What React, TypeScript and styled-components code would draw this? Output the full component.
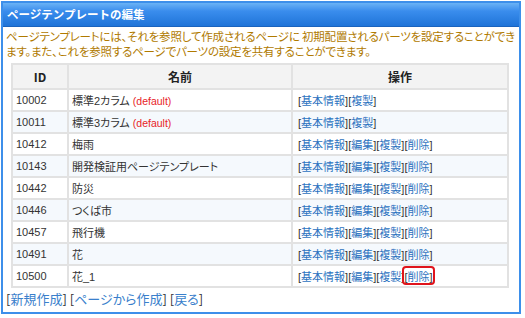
import React from "react";
import styled, { createGlobalStyle } from "styled-components";

const GlobalStyle = createGlobalStyle`
  body {
    margin: 0;
    background: #ffffff;
    font-family: "Noto Sans CJK JP", "Noto Sans", sans-serif;
  }
`;

type Row = { id: string; name: string; isDefault?: boolean; ops: string[]; marked?: boolean };

const rows: Row[] = [
  { id: "10002", name: "標準2カラム", isDefault: true, ops: ["基本情報", "複製"] },
  { id: "10011", name: "標準3カラム", isDefault: true, ops: ["基本情報", "複製"] },
  { id: "10412", name: "梅雨", ops: ["基本情報", "編集", "複製", "削除"] },
  { id: "10143", name: "開発検証用ページテンプレート", ops: ["基本情報", "編集", "複製", "削除"] },
  { id: "10442", name: "防災", ops: ["基本情報", "編集", "複製", "削除"] },
  { id: "10446", name: "つくば市", ops: ["基本情報", "編集", "複製", "削除"] },
  { id: "10457", name: "飛行機", ops: ["基本情報", "編集", "複製", "削除"] },
  { id: "10491", name: "花", ops: ["基本情報", "編集", "複製", "削除"] },
  { id: "10500", name: "花_1", ops: ["基本情報", "編集", "複製", "削除"], marked: true },
];

const App: React.FC = () => {
  return (
    <>
      <GlobalStyle />
      <Panel>
        <Header>ページテンプレートの編集</Header>
        <Description>
          ページテンプレートには、それを参照して作成されるページに 初期配置されるパーツを設定することができます。また、これを参照するページでパーツの設定を共有することができます。
        </Description>
        <Table>
          <thead>
            <tr>
              <Th $width={52}>ID</Th>
              <Th $width={220}>名前</Th>
              <Th>操作</Th>
            </tr>
          </thead>
          <tbody>
            {rows.map((row, i) => (
              <Tr key={row.id} $odd={i % 2 === 1}>
                <Td>{row.id}</Td>
                <Td>
                  {row.name}
                  {row.isDefault && <DefaultTag>(default)</DefaultTag>}
                </Td>
                <Td $padLeft={5}>
                  <Ops>
                    {row.ops.map((op) => (
                      <Op key={op} $marked={row.marked && op === "削除"}>
                        [<Link href="#">{op}</Link>]
                      </Op>
                    ))}
                  </Ops>
                </Td>
              </Tr>
            ))}
          </tbody>
        </Table>
        <Footer>
          [<FootLink href="#">新規作成</FootLink>] [<FootLink href="#">ページから作成</FootLink>] [<FootLink href="#">戻る</FootLink>]
        </Footer>
      </Panel>
    </>
  );
};

const Panel = styled.div`
  box-sizing: border-box;
  margin: 1px;
  width: 520px;
  height: 313px;
  border: 2px solid #3d8fea;
  background: #fff;
`;

const Header = styled.div`
  box-sizing: border-box;
  height: 24px;
  line-height: 22px;
  padding-left: 4px;
  color: #fff;
  font-size: 11.5px;
  font-weight: bold;
  background: linear-gradient(to bottom, #6ab2f5 0%, #3a8ded 35%, #1f74d8 100%);
  border-bottom: 1px solid #1a63bd;
`;

const Description = styled.div`
  padding: 2px 2px 0 3px;
  color: #b07a00;
  font-size: 11.5px;
  letter-spacing: -0.2px;
  line-height: 15px;
  font-feature-settings: "palt";
`;

const Table = styled.table`
  margin: 4px 0 0 8px;
  width: 498px;
  border-collapse: collapse;
  font-family: "Liberation Sans", "Noto Sans CJK JP", sans-serif;
  font-size: 11px;
  color: #333;
  border: 2px solid #e2e2e2;
`;

const Th = styled.th<{ $width?: number }>`
  width: ${(p) => (p.$width ? `${p.$width}px` : "auto")};
  height: 21px;
  background: #f3f3f3;
  border: 2px solid #e2e2e2;
  font-family: "Noto Sans CJK JP", sans-serif;
  font-size: 12px;
  font-weight: bold;
  text-align: center;
  color: #222;
`;

const Tr = styled.tr<{ $odd: boolean }>`
  background: ${(p) => (p.$odd ? "#f5f9fd" : "#ffffff")};
`;

const Td = styled.td<{ $padLeft?: number }>`
  height: 20px;
  padding: 0 3px 0 ${(p) => p.$padLeft ?? 3}px;
  border: 2px solid #e2e2e2;
  white-space: nowrap;
  font-feature-settings: "palt";
`;

const DefaultTag = styled.span`
  margin-left: 3px;
  color: #e8231f;
  font-size: 10.5px;
`;

const Ops = styled.div`
  display: flex;
`;

const Op = styled.span<{ $marked?: boolean }>`
  position: relative;
  &::after {
    content: "";
    display: ${(p) => (p.$marked ? "block" : "none")};
    position: absolute;
    left: -2px;
    right: -2px;
    top: -2px;
    bottom: -1px;
    border: 2px solid #e0141b;
    border-radius: 4px;
  }
`;

const Link = styled.a`
  color: #2b72c0;
  text-decoration: none;
`;

const Footer = styled.div`
  padding: 1px 3px;
  font-size: 13px;
  color: #333;
  font-feature-settings: "palt";
`;

const FootLink = styled.a`
  color: #3a7fcc;
  text-decoration: none;
`;

export default App;
